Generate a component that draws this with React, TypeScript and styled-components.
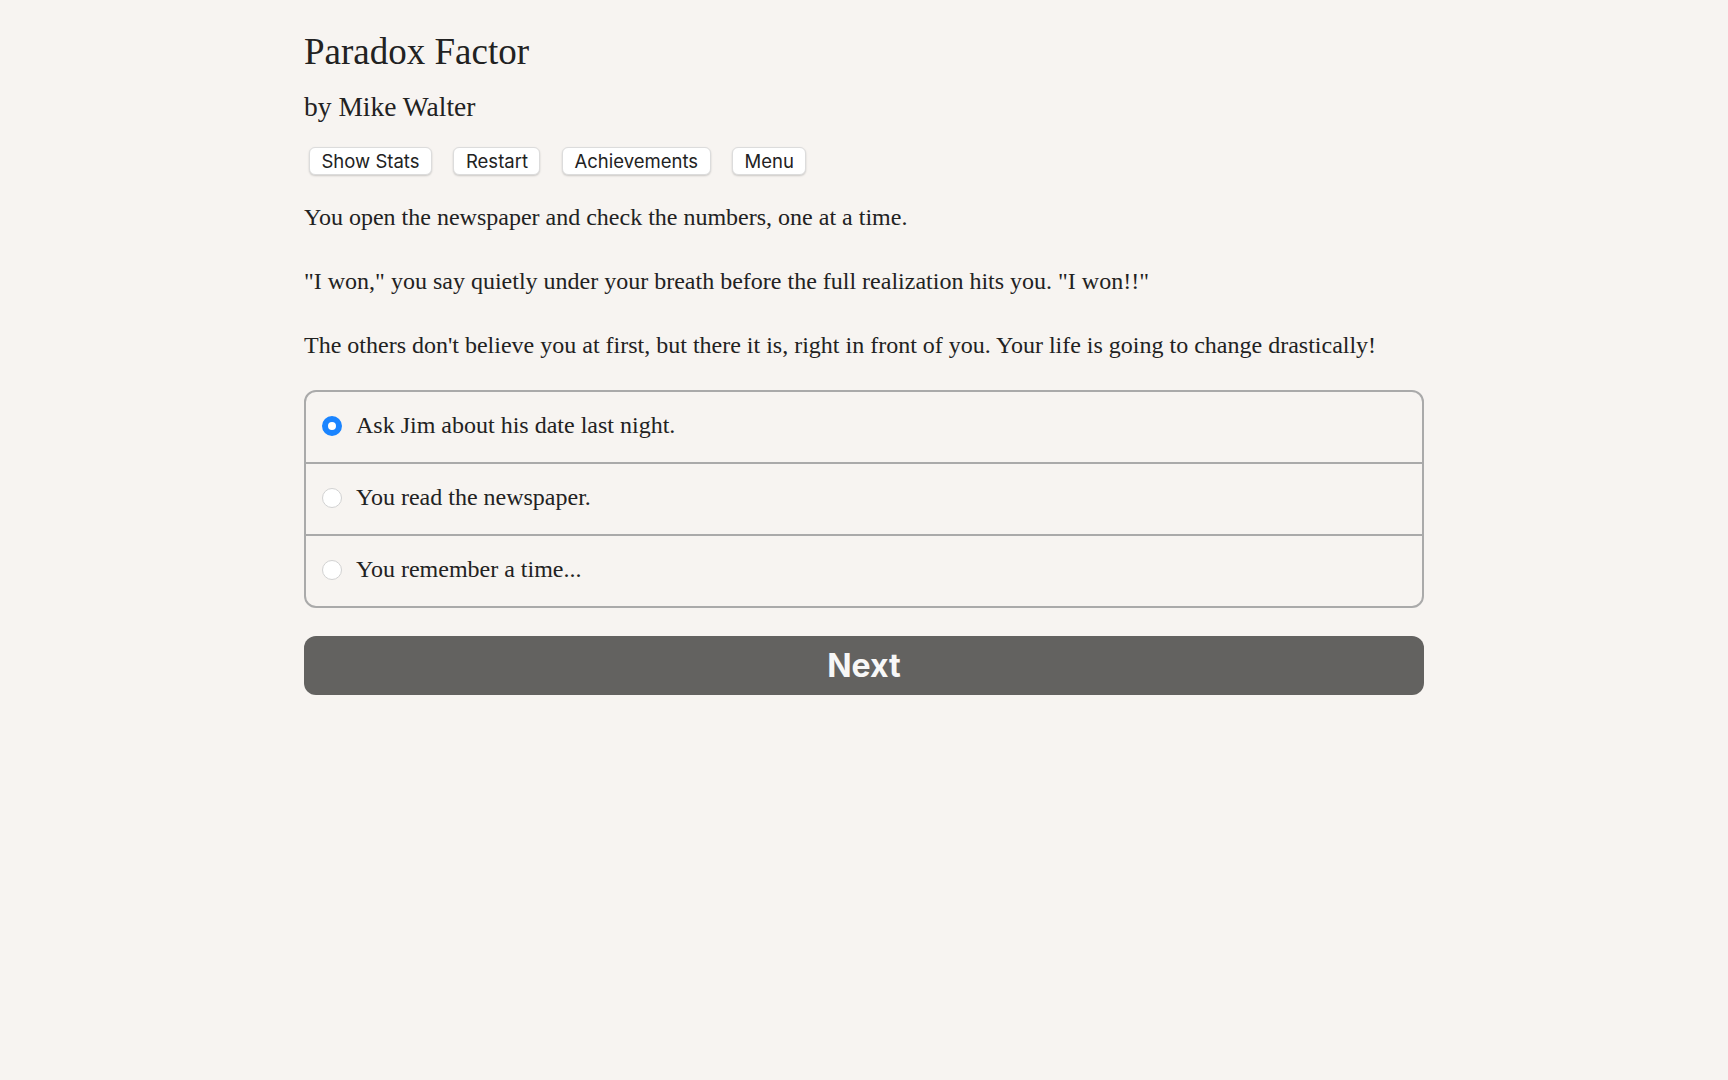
import React, { useState } from 'react';
import styled, { createGlobalStyle } from 'styled-components';

const GlobalStyle = createGlobalStyle`
  html, body {
    margin: 0;
    padding: 0;
    background: #f7f4f1;
  }
  body {
    font-family: 'Liberation Serif', 'DejaVu Serif', serif;
    color: #222;
  }
`;

const choices = [
  'Ask Jim about his date last night.',
  'You read the newspaper.',
  'You remember a time...',
];

const App: React.FC = () => {
  const [selected, setSelected] = useState(0);

  return (
    <>
      <GlobalStyle />
      <Page>
        <Title>Paradox Factor</Title>
        <Author>by Mike Walter</Author>
        <Toolbar>
          <ToolButton>Show Stats</ToolButton>
          <ToolButton>Restart</ToolButton>
          <ToolButton>Achievements</ToolButton>
          <ToolButton>Menu</ToolButton>
        </Toolbar>
        <Paragraph>You open the newspaper and check the numbers, one at a time.</Paragraph>
        <Paragraph>"I won," you say quietly under your breath before the full realization hits you. "I won!!"</Paragraph>
        <Paragraph>The others don't believe you at first, but there it is, right in front of you. Your life is going to change drastically!</Paragraph>
        <ChoiceList>
          {choices.map((choice, i) => (
            <ChoiceRow key={choice} onClick={() => setSelected(i)}>
              <Radio $checked={selected === i} />
              <ChoiceText>{choice}</ChoiceText>
            </ChoiceRow>
          ))}
        </ChoiceList>
        <NextButton>Next</NextButton>
      </Page>
    </>
  );
};

export default App;

const Page = styled.div`
  width: 1120px;
  margin: 0 auto;
  padding-top: 30px;
  display: flex;
  flex-direction: column;
`;

const Title = styled.h1`
  margin: 0;
  font-size: 37px;
  line-height: 44px;
  font-weight: normal;
  color: #222;
`;

const Author = styled.h2`
  margin: 16px 0 0;
  font-size: 27.5px;
  line-height: 33px;
  font-weight: normal;
  color: #222;
`;

const Toolbar = styled.div`
  display: flex;
  gap: 21.5px;
  margin: 24px 0 0 5px;
`;

const ToolButton = styled.button`
  height: 28px;
  padding: 0 11.5px;
  background: #fff;
  border: 1px solid #dcdcdc;
  border-radius: 6px;
  box-shadow: 0 1px 2px rgba(0, 0, 0, 0.18);
  font-family: Inter, 'Liberation Sans', sans-serif;
  font-size: 18.5px;
  color: #222;
  cursor: pointer;
`;

const Paragraph = styled.p`
  margin: 0 0 32px;
  font-size: 24px;
  line-height: 32px;
  &:first-of-type {
    margin-top: 26px;
  }
  &:last-of-type {
    margin-bottom: 29px;
  }
`;

const ChoiceList = styled.div`
  border: 2px solid #aaa;
  border-radius: 12px;
  overflow: hidden;
`;

const ChoiceRow = styled.label`
  display: flex;
  align-items: center;
  height: 70px;
  padding-left: 16px;
  padding-bottom: 3px;
  box-sizing: border-box;
  cursor: pointer;
  & + & {
    border-top: 2px solid #aaa;
    height: 72px;
  }
`;

const Radio = styled.span<{ $checked: boolean }>`
  width: 20px;
  height: 20px;
  box-sizing: border-box;
  border-radius: 50%;
  flex-shrink: 0;
  background: #fff;
  border: ${(p) => (p.$checked ? '6px solid #1a84ff' : '1px solid #d2d2d2')};
`;

const ChoiceText = styled.span`
  margin-left: 14px;
  font-size: 24px;
  color: #222;
`;

const NextButton = styled.button`
  margin-top: 28px;
  height: 59px;
  border: none;
  border-radius: 12px;
  background: #636260;
  color: #f7f7f7;
  font-family: Inter, 'Liberation Sans', sans-serif;
  font-weight: 700;
  font-size: 32px;
  cursor: pointer;
`;
